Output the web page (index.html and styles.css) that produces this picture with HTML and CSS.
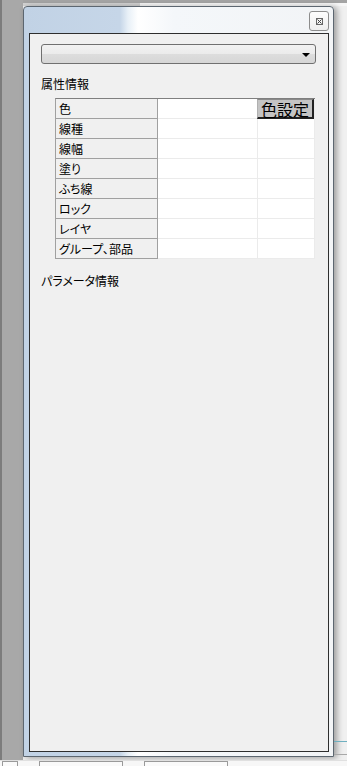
FILE: index.html
```html
<!DOCTYPE html>
<html lang="ja">
<head>
    <meta charset="UTF-8">
    <meta name="viewport" content="width=device-width, initial-scale=1.0">
    <link rel="stylesheet" href="styles.css">
</head>
<body>
    <div class="desk">
        <div class="desk-left"></div>
        <div class="window">
            <div class="titlebar">
                <div class="close-btn">
                    <svg width="7" height="7" viewBox="0 0 7 7">
                        <rect x="0.5" y="0.5" width="6" height="6" fill="none" stroke="#666" stroke-width="1"/>
                        <path d="M1.5 1.5 L5.5 5.5 M5.5 1.5 L1.5 5.5" stroke="#444" stroke-width="1"/>
                    </svg>
                </div>
            </div>
            <div class="client">
                <div class="combo">
                    <span class="combo-arrow"></span>
                </div>
                <div class="section-label">属性情報</div>
                <div class="props">
                    <div class="row">
                        <div class="cell head">色</div>
                        <div class="cell val"></div>
                        <div class="cell val last"><button class="color-btn">色設定</button></div>
                    </div>
                    <div class="row">
                        <div class="cell head">線種</div>
                        <div class="cell val"></div>
                        <div class="cell val last"></div>
                    </div>
                    <div class="row">
                        <div class="cell head">線幅</div>
                        <div class="cell val"></div>
                        <div class="cell val last"></div>
                    </div>
                    <div class="row">
                        <div class="cell head">塗り</div>
                        <div class="cell val"></div>
                        <div class="cell val last"></div>
                    </div>
                    <div class="row">
                        <div class="cell head">ふち線</div>
                        <div class="cell val"></div>
                        <div class="cell val last"></div>
                    </div>
                    <div class="row">
                        <div class="cell head">ロック</div>
                        <div class="cell val"></div>
                        <div class="cell val last"></div>
                    </div>
                    <div class="row">
                        <div class="cell head">レイヤ</div>
                        <div class="cell val"></div>
                        <div class="cell val last"></div>
                    </div>
                    <div class="row">
                        <div class="cell head">グループ、部品</div>
                        <div class="cell val"></div>
                        <div class="cell val last"></div>
                    </div>
                </div>
                <div class="section-label param">パラメータ情報</div>
            </div>
        </div>
        <div class="desk-right">
            <div class="edge-teal"></div>
            <div class="edge-gray"></div>
        </div>
    </div>
    <div class="taskbar">
        <span class="tab tab1"></span>
        <span class="tab tab2"></span>
        <span class="tab tab3"></span>
    </div>
</body>
</html>
```

FILE: styles.css
```css
html, body {
    margin: 0;
    padding: 0;
}
body {
    width: 347px;
    height: 766px;
    overflow: hidden;
    background: #f0f0f0;
    font-family: "Noto Sans CJK JP", "Noto Sans", sans-serif;
    font-size: 12px;
    color: #000;
}
.desk {
    display: flex;
    height: 760px;
    background:
        linear-gradient(#a4a4a4 0, #a4a4a4 3px, transparent 3px),
        linear-gradient(to right, #d2d2d2 0, #d2d2d2 140px, #f7f7f7 140px);
    background-size: 100% 6px, 100% 6px;
    background-repeat: no-repeat;
    background-color: #f0f0f0;
}
.desk-left {
    width: 23px;
    flex: none;
    box-sizing: border-box;
    background: #a8a8a8;
    border-left: 2px solid #7c7c7c;
}
/* 창 (window) */
.window {
    width: 311px;
    height: 751px;
    flex: none;
    margin-top: 6px;
    box-sizing: border-box;
    border: 1px solid #5c6670;
    border-radius: 4px 4px 0 0;
    padding: 0 4px 4px 5px;
    background: linear-gradient(to right, #c1d2e5 0, #c6d6e8 96px, #e8f0f7 104px, #ffffff 114px, #f4f7fa 150px, #f2f4f6 100%);
    box-shadow: 3px 1px 6px rgba(0, 0, 0, 0.35);
}
.titlebar {
    height: 26px;
    display: flex;
    justify-content: flex-end;
    align-items: flex-start;
}
.close-btn {
    width: 20px;
    height: 20px;
    margin-top: 4px;
    box-sizing: border-box;
    border: 1px solid #8c8c8c;
    border-radius: 3px;
    background: linear-gradient(#fdfdfd, #eeeeee);
    display: flex;
    align-items: center;
    justify-content: center;
}
.client {
    height: 719px;
    box-sizing: border-box;
    border: 1px solid #2e2e2e;
    background: #f0f0f0;
    padding: 10px 0 0 11px;
}
.combo {
    width: 275px;
    height: 20px;
    box-sizing: border-box;
    border: 1px solid #707070;
    border-radius: 3px;
    background: linear-gradient(#f2f2f2 0, #ebebeb 50%, #dddddd 50%, #d6d6d6 100%);
    display: flex;
    align-items: center;
    justify-content: flex-end;
    padding-right: 5px;
}
.combo-arrow {
    width: 0;
    height: 0;
    border-left: 4px solid transparent;
    border-right: 4px solid transparent;
    border-top: 4px solid #000;
    margin-top: 1px;
}
.section-label {
    margin-top: 12px;
    line-height: 16px;
    height: 16px;
    font-feature-settings: "palt";
}
.section-label.param {
    margin-top: 14px;
}
/* 속성 표 */
.props {
    margin-top: 6px;
    margin-left: 14px;
    width: 260px;
    box-sizing: border-box;
    border-top: 1px solid #7f7f7f;
    border-left: 1px solid #a0a0a0;
}
.row {
    display: grid;
    grid-template-columns: 102px 100px 57px;
    height: 20px;
}
.cell {
    box-sizing: border-box;
    height: 20px;
    line-height: 19px;
}
.head {
    background: #f0f0f0;
    border-bottom: 1px solid #a0a0a0;
    border-right: 1px solid #a0a0a0;
    padding-left: 3px;
    font-feature-settings: "palt";
    white-space: nowrap;
}
.val {
    background: #fff;
    border-bottom: 1px solid #ebebeb;
    border-right: 1px solid #ebebeb;
}
.val.last {
    position: relative;
}
.color-btn {
    position: absolute;
    top: 0;
    left: -1px;
    width: 57px;
    height: 20px;
    margin: 0;
    padding: 0;
    box-sizing: border-box;
    border-top: 1px solid #8a8a8a;
    border-left: 1px solid #b0b0b0;
    border-right: 2px solid #222;
    border-bottom: 2px solid #222;
    background: #c4c4c4;
    font-family: "Noto Sans CJK JP", sans-serif;
    font-size: 16px;
    line-height: 16px;
    color: #000;
    text-align: center;
}
.desk-right {
    flex: 1;
    display: flex;
    flex-direction: column;
}
.edge-teal {
    margin-top: 741px;
    height: 1px;
    background: #6fb0c0;
}
.edge-gray {
    margin-top: 12px;
    height: 1px;
    background: #a8a8a8;
}
.taskbar {
    height: 6px;
    background: #f7f7f7;
    position: relative;
    border-top: 1px solid #e0e0e0;
}
.tab {
    position: absolute;
    top: 0;
    height: 6px;
    box-sizing: border-box;
    border: 1px solid #9a9a9a;
    border-bottom: none;
    border-radius: 1px 1px 0 0;
    background: #fafafa;
}
.tab1 { left: 2px; width: 16px; }
.tab2 { left: 39px; width: 84px; }
.tab3 { left: 144px; width: 84px; }
```
